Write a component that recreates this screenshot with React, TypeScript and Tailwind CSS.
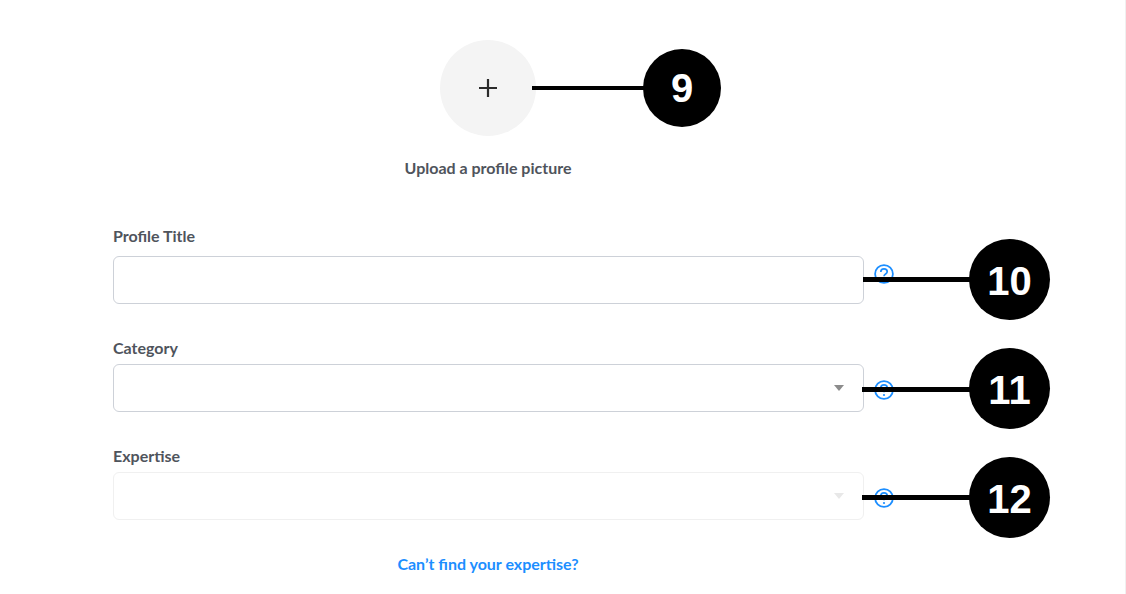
const fontLato = "font-['Lato','Noto_Sans',sans-serif]";

function HelpIcon({ className }: { className: string }) {
  return (
    <svg viewBox="0 0 20 20" className={`w-5 h-5 shrink-0 ml-[10px] ${className}`} fill="none">
      <circle cx="10" cy="10" r="8.9" stroke="#1c8eff" strokeWidth="1.8" />
      <path d="M6.8 7.9c0-1.9 1.4-3 3.2-3s3.2 1.1 3.2 2.8c0 2.3-3.2 2.3-3.2 4.6" stroke="#1c8eff" strokeWidth="1.7" />
      <circle cx="10" cy="15" r="1.1" fill="#1c8eff" />
    </svg>
  );
}

function Field({ label, caret, disabled, helpClass, labelGap }: { label: string; caret?: boolean; disabled?: boolean; helpClass: string; labelGap: string }) {
  return (
    <div className="flex flex-col">
      <label className={`text-[16px] leading-[24px] font-bold text-[#4f545c] ${labelGap}`}>{label}</label>
      <div className="flex items-center">
        <div
          className={`w-[751px] h-[48px] rounded-[6px] border bg-white flex items-center justify-end pr-[19px] ${
            disabled ? "border-[#f0f0f0]" : "border-[#cdd1d8]"
          }`}
        >
          {caret && (
            <svg viewBox="0 0 10 6" className="w-[10px] h-[6px]">
              <path d="M0 0h10L5 6z" fill={disabled ? "#e8e8e8" : "#8c8c8c"} />
            </svg>
          )}
        </div>
        <HelpIcon className={helpClass} />
      </div>
    </div>
  );
}

function Callout({ n, className, size }: { n: number; className: string; size: string }) {
  return (
    <div
      className={`absolute rounded-full bg-black text-white flex items-center justify-center font-['Liberation_Sans',Arial,sans-serif] font-bold text-[40px] leading-none ${size} ${className}`}
    >
      {n}
    </div>
  );
}

export default function App() {
  return (
    <div className={`relative w-[1126px] h-[594px] overflow-hidden bg-white border-r border-[#f0f0f0] ${fontLato}`}>
      <div className="flex flex-col items-center w-[976px] pt-10">
        <div className="w-24 h-24 rounded-full bg-[#f4f4f4] flex items-center justify-center">
          <svg viewBox="0 0 18 18" className="w-[18px] h-[18px]" fill="none" stroke="#2b2b2b" strokeWidth="2.2">
            <path d="M9 0v18M0 9h18" />
          </svg>
        </div>
        <p className="mt-5 text-[16px] leading-6 font-bold text-[#4f545c]">Upload a profile picture</p>
      </div>

      <div className="ml-[113px] mt-[44px] flex flex-col gap-[36px]">
        <Field label="Profile Title" helpClass="mb-3" labelGap="mb-2" />
        <div className="flex flex-col gap-[32px] -mt-[4px]">
          <Field label="Category" caret helpClass="mt-1" labelGap="mb-1" />
          <Field label="Expertise" caret disabled helpClass="mt-1" labelGap="mb-1" />
        </div>
      </div>

      <div className="w-[976px] mt-8 text-center">
        <a className="text-[16px] leading-6 font-bold text-[#1c8eff]">Can’t find your expertise?</a>
      </div>

      {/* annotation overlays */}
      <div className="absolute left-[532px] top-[86px] w-[115px] h-1 bg-black" />
      <div className="absolute left-[863px] top-[277px] w-[110px] h-[5px] bg-black" />
      <div className="absolute left-[862px] top-[387px] w-[110px] h-[5px] bg-black" />
      <div className="absolute left-[862px] top-[495px] w-[110px] h-[5px] bg-black" />
      <Callout n={9} size="w-[78px] h-[78px]" className="left-[643px] top-[49px]" />
      <Callout n={10} size="w-[81px] h-[81px]" className="left-[969px] top-[239px] pt-[2px]" />
      <Callout n={11} size="w-[81px] h-[81px]" className="left-[969px] top-[348px] pt-[2px]" />
      <Callout n={12} size="w-[81px] h-[81px]" className="left-[969px] top-[457px] pt-[2px]" />
    </div>
  );
}
